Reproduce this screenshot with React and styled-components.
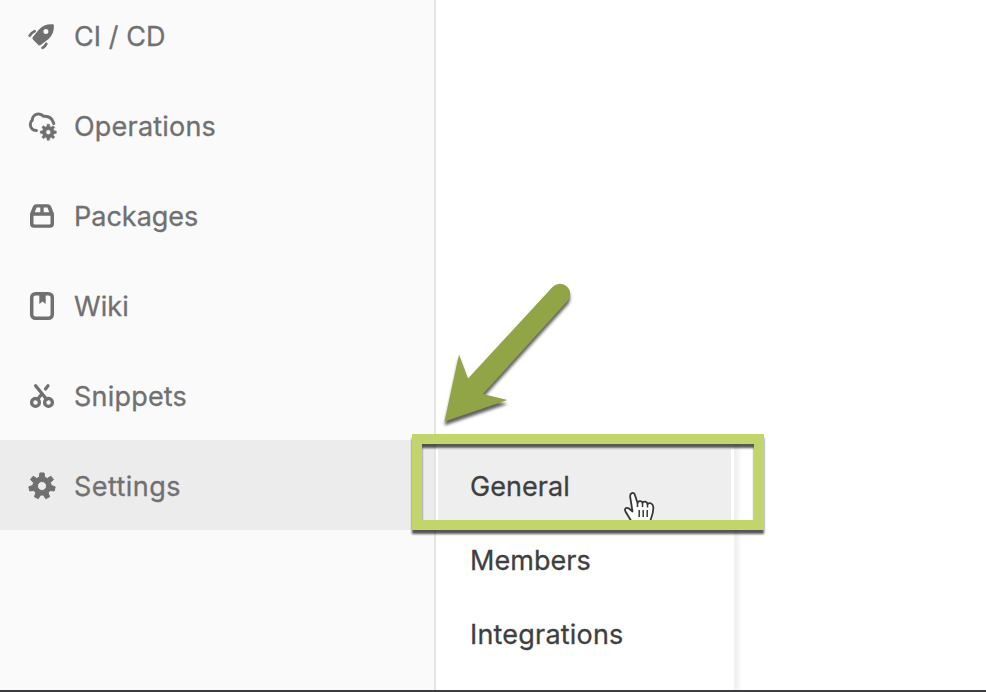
import React from "react";
import styled, { createGlobalStyle } from "styled-components";

const GlobalStyle = createGlobalStyle`
  * { box-sizing: border-box; }
  html, body { margin: 0; padding: 0; overflow: hidden; background: #fff; }
`;

const Screen = styled.div`
  position: relative;
  display: flex;
  width: 986px;
  height: 692px;
  overflow: hidden;
  background: #fff;
  border-bottom: 2px solid #3c3c3e;
  font-family: Inter, "Liberation Sans", sans-serif;
  font-size: 27px;
`;

const Sidebar = styled.nav`
  display: flex;
  flex-direction: column;
  flex: none;
  width: 436px;
  height: 700px;
  margin-top: -10px;
  background: #fafafa;
  border-right: 2px solid #e4e4e5;
`;

const NavItem = styled.a`
  display: flex;
  align-items: center;
  flex: none;
  gap: 18px;
  height: 90px;
  padding: 2px 0 0 28px;
  color: #707070;
  background: ${(p) => (p.$active ? "#ececec" : "transparent")};
`;

const Label = styled.span`
  margin-top: 2px;
  line-height: 36px;
  white-space: nowrap;
  letter-spacing: ${(p) => p.$track}px;
  -webkit-text-stroke: 0.3px currentColor;
`;

const Icon = styled.svg`
  flex: none;
  width: 28px;
  height: 28px;
  overflow: visible;
`;

const Flyout = styled.div`
  display: flex;
  flex-direction: column;
  flex: none;
  width: 298px;
  height: 300px;
  margin-top: 441px;
  padding-top: 8px;
  background: #fff;
  box-shadow: 3px 0 0 #f1f1f1, 6px 0 2px #f6f6f6;
`;

const FlyoutItem = styled.a`
  display: flex;
  align-items: center;
  flex: none;
  height: 74px;
  margin: 0 3px 0 2px;
  padding-left: 32px;
  color: #3f3f3f;
  background: ${(p) => (p.$active ? "#eeeeee" : "transparent")};
`;

const Highlight = styled.div`
  position: absolute;
  left: 412px;
  top: 434px;
  width: 352px;
  height: 96px;
  border: 10px solid #c2d46c;
  filter: drop-shadow(0 4px 1px rgba(0, 0, 0, 0.66));
`;

const Arrow = styled.svg`
  position: absolute;
  left: 435px;
  top: 275px;
  width: 150px;
  height: 160px;
  filter: drop-shadow(0 4px 1.5px rgba(0, 0, 0, 0.62));
`;

const Pointer = styled.svg`
  position: absolute;
  left: 622px;
  top: 490px;
  width: 34px;
  height: 30px;
`;

const gear = (cx, cy, teeth, outer, inner) => {
  const step = (Math.PI * 2) / teeth;
  const pts = [];
  for (let i = 0; i < teeth; i++) {
    const a = i * step - Math.PI / 2;
    [[-0.32, inner], [-0.18, outer], [0.18, outer], [0.32, inner]].forEach(([f, r]) => {
      pts.push(`${(cx + r * Math.cos(a + f * step)).toFixed(2)} ${(cy + r * Math.sin(a + f * step)).toFixed(2)}`);
    });
  }
  return `M${pts.join("L")}Z`;
};

const icons = {
  rocket: (
    <>
      <path
        fill="currentColor"
        fillRule="evenodd"
        d="M25.400 2.400C19.500 1.800 14.600 3.400 11 7.500L4.800 15Q3.900 16.200 4.900 17.400L10.400 23Q11.500 24 12.700 23.100L20.600 17C24.600 13.200 26.200 8.500 25.900 3Q25.900 2.500 25.400 2.400ZM17.900 7.100A2.500 2.500 0 1 1 17.900 12.100A2.500 2.500 0 1 1 17.900 7.100Z"
      />
      <path fill="none" stroke="currentColor" strokeLinecap="round" strokeWidth="2.800" d="M6.600 9.200Q3.600 10.400 1.700 13.600M18.200 21.900Q17.200 24.400 14.600 25.900" />
    </>
  ),
  cloud: (
    <>
      <path fill="none" stroke="currentColor" strokeLinecap="round" strokeWidth="3" d="M8.400 18.500C4.400 18.500 2.300 15.600 2.300 12.500Q2.300 9.700 4.200 8.200C4.400 4.300 7.300 2 10.600 2Q13.500 2 15.500 4.300C20.500 3.800 24.300 6.400 25.800 11.500" />
      <path fill="currentColor" stroke="currentColor" strokeWidth="0.500" fillRule="evenodd" d={`${gear(20.3, 20.2, 8, 8.1, 5.9)}M20.300 17.800A2.400 2.400 0 1 0 20.300 22.600A2.400 2.400 0 1 0 20.300 17.800Z`} />
    </>
  ),
  package: (
    <path
      fill="currentColor"
      fillRule="evenodd"
      d="M8.300 2.300H19.700Q22.200 2.300 23.100 4.600L25.500 10.500Q26 11.500 26 12.500V21.700Q26 25.700 22 25.700H6Q2 25.700 2 21.700V12.500Q2 11.500 2.500 10.500L4.900 4.600Q5.800 2.300 8.300 2.300ZM8.600 5.600L6.700 10.300H12.300V5.600ZM15.700 5.600V10.300H21.300L19.400 5.600ZM5.500 13.800V21.300Q5.500 22.500 6.700 22.500H21.300Q22.500 22.500 22.500 21.300V13.800Z"
    />
  ),
  book: (
    <>
      <rect x="3.700" y="1.700" width="20.600" height="24.600" rx="3.800" fill="none" stroke="currentColor" strokeWidth="3.500" />
      <path fill="currentColor" d="M11.300 2H17.700V11.900L14.500 9.600L11.300 11.900Z" />
    </>
  ),
  scissors: (
    <g fill="none" stroke="currentColor" strokeWidth="3.300">
      <circle cx="7.500" cy="20.400" r="3.900" />
      <circle cx="20.500" cy="20.400" r="3.900" />
      <path strokeLinecap="round" d="M7.600 3.800L18.600 17.200M20 3.800L17.500 7M12.600 13.500L9.600 17.200" />
    </g>
  ),
  settings: (
    <path fill="currentColor" stroke="currentColor" strokeLinejoin="round" strokeWidth="1" fillRule="evenodd" d={`${gear(14, 14, 7, 13.2, 9.2)}M14 9.500A4.500 4.500 0 1 0 14 18.500A4.500 4.500 0 1 0 14 9.500Z`} />
  ),
};

const navItems = [
  { icon: "rocket", label: "CI / CD", track: 0.05 },
  { icon: "cloud", label: "Operations", track: 0.2 },
  { icon: "package", label: "Packages", track: 0 },
  { icon: "book", label: "Wiki", track: 0.1 },
  { icon: "scissors", label: "Snippets", track: 0.2 },
  { icon: "settings", label: "Settings", track: 0.45, active: true },
];

const flyoutItems = [
  { label: "General", track: 0.05, active: true },
  { label: "Members", track: 0.05 },
  { label: "Integrations", track: 0.2 },
];

export default function App() {
  return (
    <>
      <GlobalStyle />
      <Screen>
        <Sidebar>
          {navItems.map((item) => (
            <NavItem key={item.label} $active={item.active}>
              <Icon viewBox="0 0 28 28">{icons[item.icon]}</Icon>
              <Label $track={item.track}>{item.label}</Label>
            </NavItem>
          ))}
        </Sidebar>
        <Flyout>
          {flyoutItems.map((item) => (
            <FlyoutItem key={item.label} $active={item.active}>
              <Label $track={item.track}>{item.label}</Label>
            </FlyoutItem>
          ))}
        </Flyout>
        <Pointer viewBox="0 0 34 30">
          <path
            fill="#fff"
            stroke="#363636"
            strokeWidth="1.800"
            strokeLinejoin="round"
            d="M10.500 34C9 29.500 6 26 3.500 21.500C2 18.500 4.500 17 7 18.500L10.500 21.500L8.200 7C7.600 2.500 12 1.500 13 5.200L15.500 13C16 10.500 20 10.500 20.500 13C21.500 10.800 25 11.300 25.500 14C28 12 31 13.500 31.300 17C31.500 23 30.500 25 28.500 30V34Z"
          />
          <path fill="none" stroke="#363636" strokeWidth="1.500" d="M15.500 13V17M20.500 13V17M25.500 14V17.500M17.200 20V27M21.200 20V27M25.200 20V27" />
        </Pointer>
        <Highlight />
        <Arrow viewBox="435 275 150 160">
          <path fill="#91a446" d="M444.500 421.500L459 354.500L468 378.500L552.500 287A10.200 10.200 0 0 1 567.500 301L483 394L507.500 400Z" />
        </Arrow>
      </Screen>
    </>
  );
}
